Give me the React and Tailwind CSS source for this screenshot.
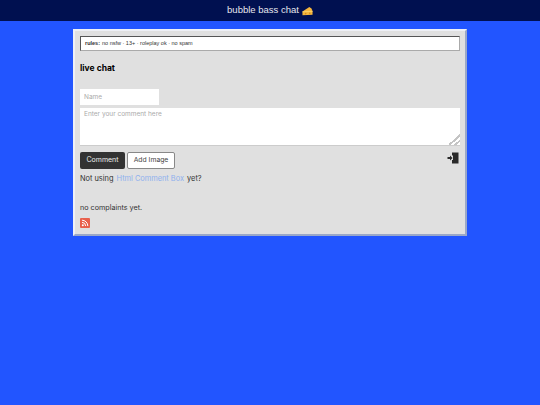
const font = { fontFamily: 'Inter, "Noto Sans", sans-serif' }

function Cheese() {
  return (
    <svg viewBox="0 0 12 10" className="ml-[3px] h-[10px] w-[11px]">
      <path d="M0.5 5.5 L8 0.5 Q11 1.5 11.5 5 L11.5 9 L0.5 9.5 Z" fill="#f6b73c" />
      <path d="M0.5 5.5 L11.5 5 L11.5 5.8 L0.5 6.4 Z" fill="#fbd774" />
      <circle cx="4" cy="7.8" r="0.9" fill="#d48a1c" />
      <circle cx="8.5" cy="7.4" r="0.9" fill="#d48a1c" />
    </svg>
  )
}

function ExitIcon() {
  return (
    <svg viewBox="0 0 12 12" className="h-[12px] w-[12px]">
      <path d="M5 0.5 H11.5 V11.5 H5 V8 H6 V3.5 H5 Z" fill="#2a2a2a" />
      <path d="M0.5 5 H3 V3.5 L5.5 6 L3 8.5 V7 H0.5 Z" fill="#2a2a2a" />
    </svg>
  )
}

function RssIcon() {
  return (
    <svg viewBox="0 0 10 10" className="h-[10px] w-[10px]">
      <rect width="10" height="10" rx="1" fill="#e8604c" />
      <circle cx="2.8" cy="7.2" r="1" fill="#fff" />
      <path d="M2 4.4 A3.6 3.6 0 0 1 5.6 8 M2 2.2 A5.8 5.8 0 0 1 7.8 8" stroke="#fff" strokeWidth="1" fill="none" />
    </svg>
  )
}

export default function App() {
  return (
    <div className="min-h-[405px] bg-[#2255ff]">
      <header className="flex h-[21px] items-center justify-center bg-[#001050] text-[9.5px] text-[#e6e6ee]" style={{ fontFamily: '"Liberation Sans", sans-serif' }}>
        <span>bubble bass chat</span>
        <Cheese />
      </header>

      <main className="mx-auto mt-2 h-[207px] w-[394px] border-2 border-t-[#eef0f6] border-r-[#9aa8c8] border-b-[#9aa8c8] border-l-[#eef0f6] bg-[#e0e0e0] px-[5px] pt-[5px]">
        <div
          className="flex h-[15px] items-center border border-t-[#555] border-r-[#aaa] border-b-[#aaa] border-l-[#555] bg-white pl-1 text-[5.5px] text-[#333]"
          style={{ fontFamily: '"Liberation Sans", sans-serif' }}
        >
          <b className="mr-[2px]">rules:</b> no nsfw · 13+ · roleplay ok · no spam
        </div>

        <div style={font}>
          <h2 className="mt-[11px] text-[8.5px] leading-[12px] font-bold text-black">live chat</h2>

          <input
            placeholder="Name"
            className="mt-[15px] block h-[16px] w-[79px] bg-white px-1 text-[6.5px] outline-none placeholder:text-[#aaa]"
          />
          <textarea
            placeholder="Enter your comment here"
            className="mt-[3px] block h-[38px] w-[380px] resize-y border-b border-[#ccc] bg-white px-1 py-[2px] text-[6.5px] outline-none placeholder:text-[#aaa] [&::-webkit-resizer]:bg-[linear-gradient(135deg,transparent_60%,#c4c4c4_60%,#c4c4c4_70%,transparent_70%,transparent_80%,#c4c4c4_80%,#c4c4c4_90%,transparent_90%)]"
          />

          <div className="mt-[6px] flex items-start">
            <button className="h-[17px] w-[45px] rounded-[2px] bg-[#333] text-[7px] text-[#eee]">Comment</button>
            <button className="ml-[2px] h-[17px] w-[48px] rounded-[2px] border border-[#888] bg-white text-[6.8px] text-[#444]">Add Image</button>
            <div className="mr-[1px] ml-auto"><ExitIcon /></div>
          </div>

          <p className="mt-[4px] text-[7.4px] leading-[11px] text-[#333]">
            Not using <span className="mx-[1px] text-[#8fb0ee]">Html Comment Box</span> yet?
          </p>
          <p className="mt-[18px] text-[7.2px] leading-[11px] text-[#333]">no complaints yet.</p>
          <div className="mt-[5px]"><RssIcon /></div>
        </div>
      </main>
    </div>
  )
}
